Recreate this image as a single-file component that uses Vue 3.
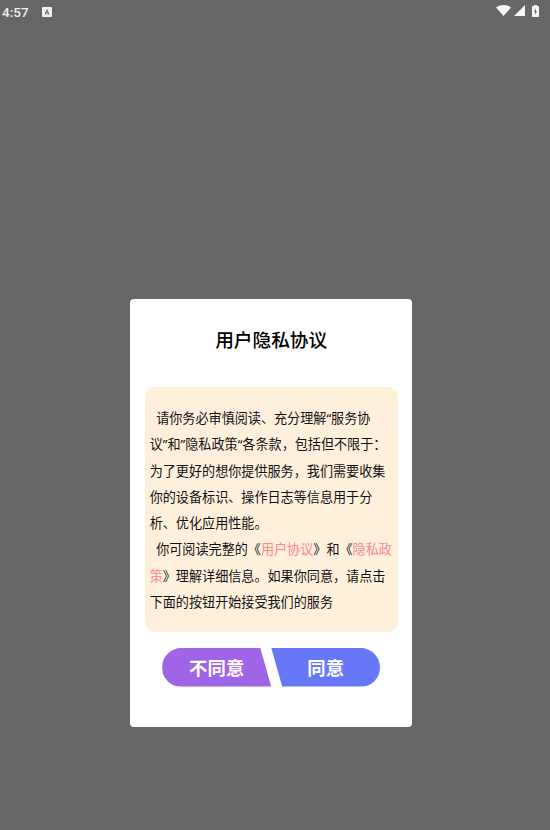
<script setup>
</script>

<template>
  <div class="page">
    <header class="status">
      <div class="status-left">
        <span class="time">4:57</span>
        <svg class="notice" viewBox="0 0 10 10" width="10" height="10">
          <path fill="#f2f2f2" fill-rule="evenodd" d="M1 0h8a1 1 0 0 1 1 1v8a1 1 0 0 1-1 1H1a1 1 0 0 1-1-1V1a1 1 0 0 1 1-1zM5 1.800 2.600 7.600h1.200l.4-1.100h1.700l.4 1.100h1.200L5 1.800zM5 3.800l.5 1.700h-1z"/>
        </svg>
      </div>
      <div class="status-right">
        <svg viewBox="0 0 15 11" width="15" height="11"><path fill="#f5f5f5" d="M7.500 11 0 2.600C2 .9 4.600 0 7.500 0S13 .9 15 2.600z"/></svg>
        <svg viewBox="0 0 11 11" width="11" height="11"><path fill="#f5f5f5" d="M11 0v11H0z"/></svg>
        <svg class="battery" viewBox="0 0 7 12" width="7" height="12"><path fill="#f5f5f5" fill-rule="evenodd" d="M2 0h3v1h1.200c.4 0 .8.4.8.8v9.400c0 .4-.4.8-.8.8H.8c-.4 0-.8-.4-.8-.8V1.800C0 1.400.4 1 .8 1H2zM4 3 2 7h1.200L3 10l2-4H3.800z"/></svg>
      </div>
    </header>

    <main class="overlay">
      <section class="dialog">
        <h1 class="title">用户隐私协议</h1>
        <div class="content">
          <p class="para">请你务必审慎阅读、充分理解“服务协<br>议”和”隐私政策“各条款，包括但不限于：<br>为了更好的想你提供服务，我们需要收集<br>你的设备标识、操作日志等信息用于分<br>析、优化应用性能。</p>
          <p class="para">你可阅读完整的《<span class="link">用户协议</span>》和《<span class="link">隐私政<br>策</span>》理解详细信息。如果你同意，请点击<br>下面的按钮开始接受我们的服务</p>
        </div>
        <div class="actions">
          <button class="btn btn-no">不同意</button>
          <button class="btn btn-yes">同意</button>
        </div>
      </section>
    </main>
  </div>
</template>

<style scoped>
.page {
  width: 550px;
  height: 830px;
  background: #666666;
  display: flex;
  flex-direction: column;
  overflow: hidden;
  font-family: "Noto Sans CJK SC", "Noto Sans", sans-serif;
}
.status {
  height: 24px;
  flex: none;
  display: flex;
  justify-content: space-between;
  align-items: flex-start;
  padding: 0 11px 0 2px;
  box-sizing: border-box;
}
.status-left {
  display: flex;
  align-items: center;
  gap: 13px;
  height: 23px;
}
.time {
  font-family: Roboto, sans-serif;
  font-size: 13.5px;
  font-weight: 500;
  color: #f0f0f0;
}
.status-right {
  display: flex;
  align-items: center;
  gap: 3px;
  height: 21px;
}
.battery {
  margin-left: 4px;
}
.overlay {
  flex: 1;
  display: flex;
  justify-content: center;
  padding-top: 275px;
  padding-right: 8px;
  box-sizing: border-box;
}
.dialog {
  width: 282px;
  height: 428px;
  background: #ffffff;
  border-radius: 4px;
  padding: 0 14.3px 0 14.7px;
  box-sizing: border-box;
  display: flex;
  flex-direction: column;
}
.title {
  margin: 26px 0 0;
  height: 28px;
  line-height: 28px;
  text-align: center;
  font-size: 18.7px;
  font-weight: 500;
  color: #000000;
}
.content {
  margin-top: 34px;
  height: 245px;
  background: #fff0db;
  border-radius: 10px;
  padding: 18px 0 0 5px;
  box-sizing: border-box;
  font-family: "Noto Sans", "Noto Sans CJK SC", sans-serif;
  font-size: 13.1px;
  line-height: 26.25px;
  color: #111111;
  white-space: nowrap;
}
.para {
  margin: 0;
  text-indent: 6.5px;
}
.link {
  color: #fb8791;
}
.actions {
  display: flex;
  justify-content: center;
  margin-top: 15.5px;
}
.btn {
  border: 0;
  padding: 0;
  height: 39px;
  font-family: inherit;
  font-size: 18.4px;
  font-weight: 700;
  color: #ffffff;
  cursor: pointer;
}
.btn-no {
  width: 109px;
  background: #a064e6;
  border-radius: 20px 0 0 20px;
  clip-path: polygon(0 0, 98px 0, 109px 100%, 0 100%);
}
.btn-yes {
  width: 109px;
  background: #6678f7;
  border-radius: 0 20px 20px 0;
  clip-path: polygon(0 0, 100% 0, 100% 100%, 11px 100%);
}
</style>
